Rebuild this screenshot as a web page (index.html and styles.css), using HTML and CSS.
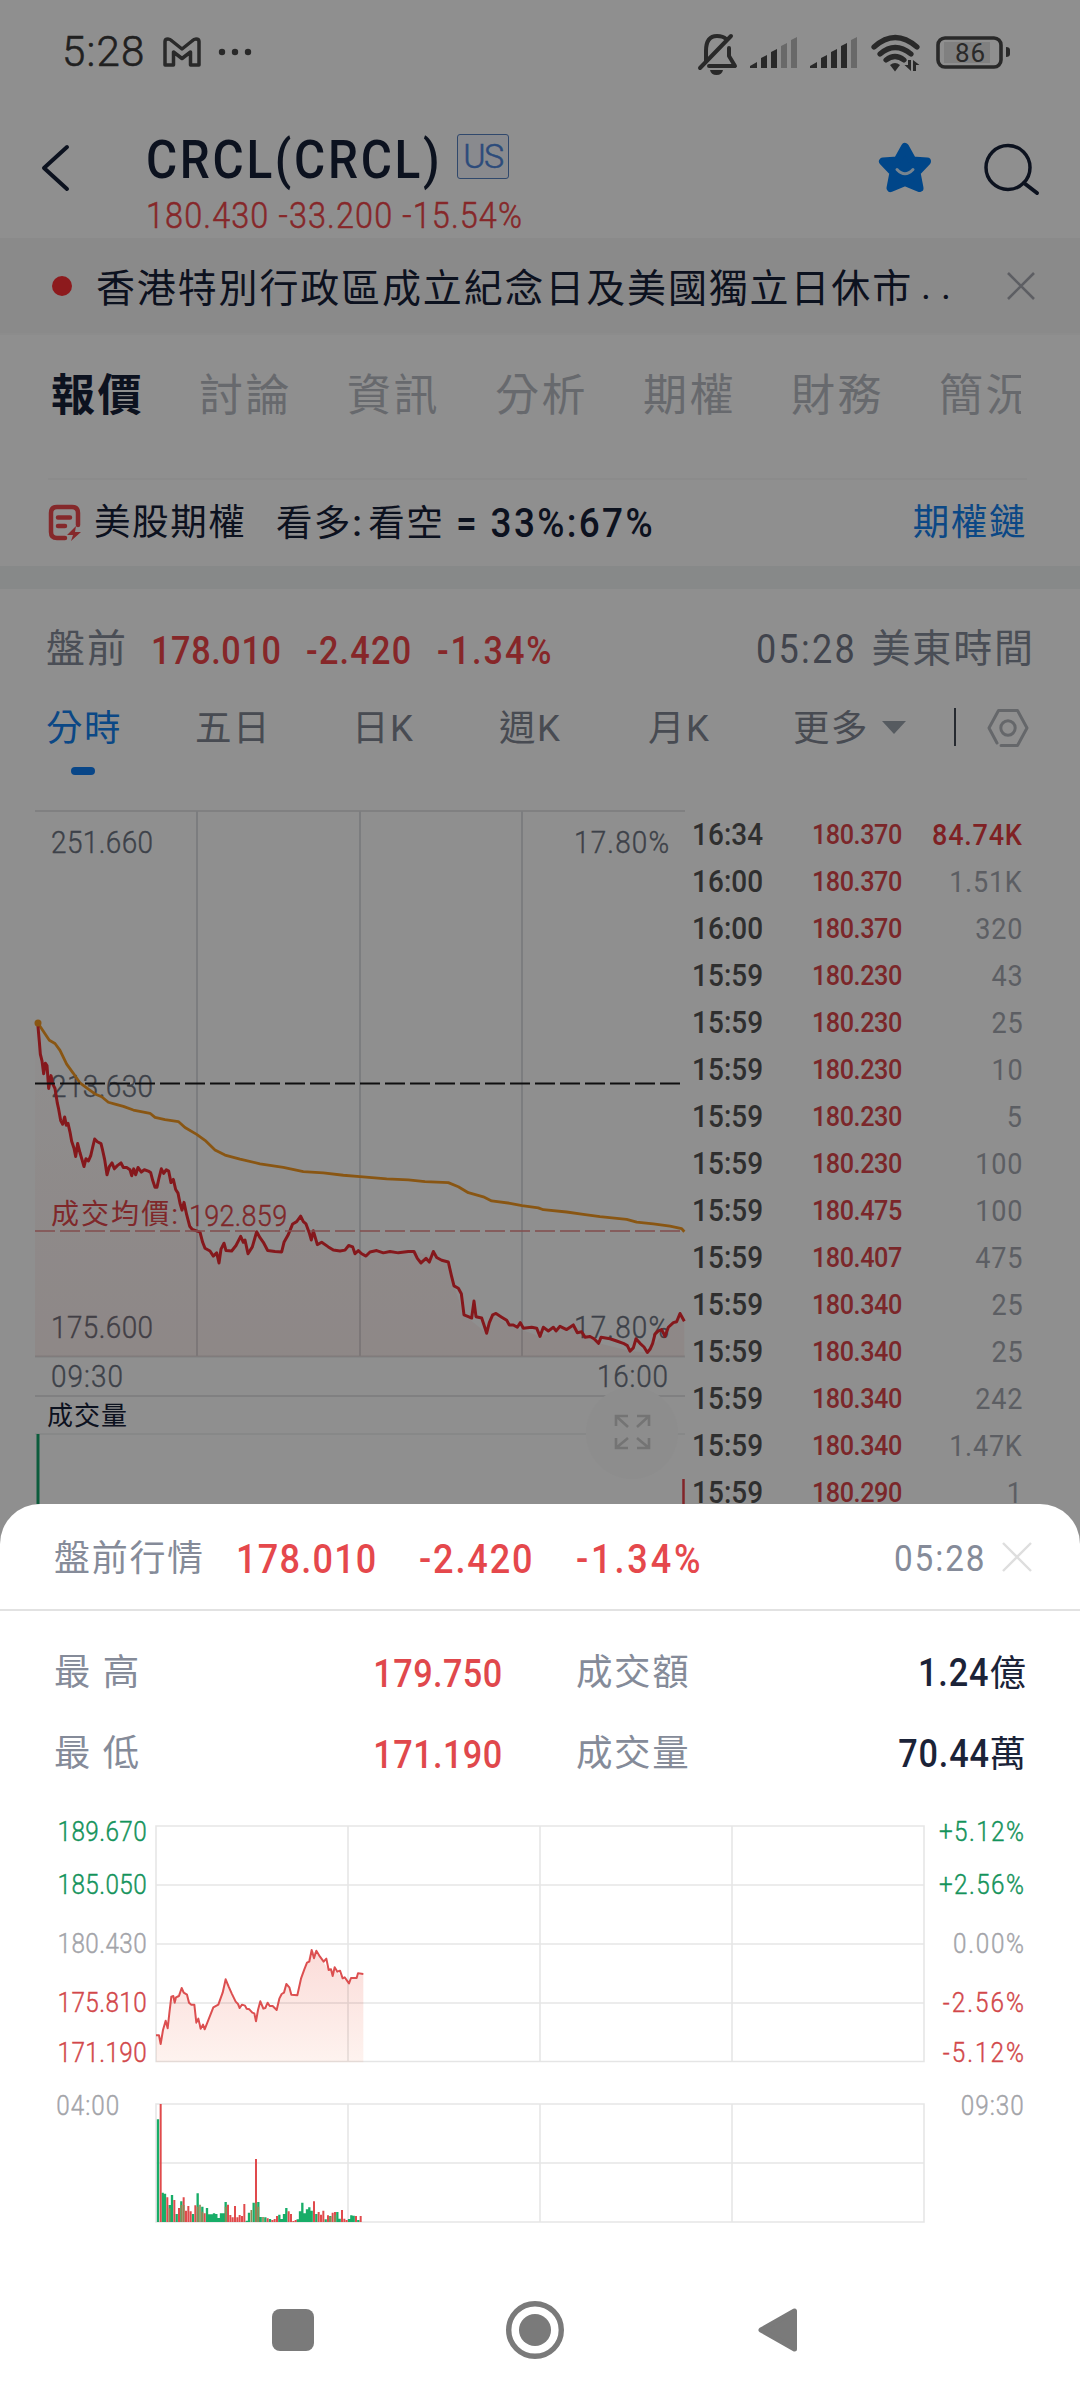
FILE: index.html
```html
<!DOCTYPE html>
<html lang="zh-Hant">
<head>
<meta charset="utf-8">
<title>CRCL</title>
<link rel="stylesheet" href="styles.css">
</head>
<body>
<div class="screen">
  <div class="page">
    <div class="status">
      <span class="clock">5:28</span>
      <svg class="gmail" width="38" height="30" viewBox="0 0 38 30"><path d="M2 4.500Q2 2 5 2Q7 2 9 4L19 12L29 4Q31 2 33 2Q36 2 36 4.500V28H27.500V15L19 21.500L10.500 15V28H2Z"/></svg>
      <svg class="more" width="34" height="10" viewBox="0 0 34 10"><circle cx="4" cy="5" r="3.200"/><circle cx="17" cy="5" r="3.200"/><circle cx="30" cy="5" r="3.200"/></svg>
      <svg class="tray" width="320" height="46" viewBox="694 30 320 46">
        <g fill="none" stroke="#4a4a4a" stroke-width="4" stroke-linecap="round">
          <path d="M706 61V51C706 41 710 36 717 36Q723 36 726 39M729 48V56L735 66H709M700 68L731 36" stroke-linejoin="round"/>
          <rect x="938" y="38" width="63" height="29" rx="7" stroke-width="3.600"/>
          <path d="M874 47Q895 28 917 47M880 54Q895 41 911 54M886 60Q895 53 904 60" stroke-width="5.200"/>
        </g>
        <g fill="#4a4a4a">
          <path d="M710 70H723Q722 75 716.500 75T710 70Z"/>
          <path d="M750 66L757 62V68H750ZM761 58L767 55V68H761ZM771 52L777 49V68H771Z"/>
          <path d="M810 66L817 62V68H810ZM821 58L827 55V68H821ZM831 52L837 49V68H831ZM841 46L847 43V68H841Z"/>
          <path d="M890 65Q895 61 900 65L895 71.500Z"/>
          <path d="M911 60V71L904.500 65H908V60ZM913 71V60L919.500 65H916V71Z"/>
          <path d="M1006 47Q1010 47 1010 50V54Q1010 57 1006 57Z"/>
        </g>
        <path fill="#bcbcbc" d="M781 46L787 43V68H781ZM791 40L797 37V68H791ZM851 40L857 37V68H851Z"/>
        <rect x="944" y="42" width="46" height="21" fill="#e4e4e4"/>
        <text x="955" y="61.500" font-size="26" fill="#4a4a4a" textLength="30">86</text>
      </svg>
    </div>

    <div class="header">
      <svg class="back" width="34" height="50" viewBox="0 0 34 50"><path d="M29 5L6 26L29 47"/></svg>
      <div class="heading">
        <div class="name"><span class="ticker"><span class="din">CRCL(CRCL)</span></span><span class="market">US</span></div>
        <div class="sub"><span class="din">180.430 -33.200 -15.54%</span></div>
      </div>
      <svg class="star" width="56" height="54" viewBox="0 0 56 54"><path d="M28 6L35.500 19.500L50 20.500L39.500 31.500L42.500 47L28 41L13.500 47L16.500 31.500L6 20.500L20.500 19.500Z" fill="#007df5" stroke="#007df5" stroke-width="8" stroke-linejoin="round"/><path d="M20 28.500Q28 37 36 28.500" fill="none" stroke="#d5ecff" stroke-width="3" stroke-linecap="round"/></svg>
      <svg class="search" width="58" height="54" viewBox="0 0 58 54"><g fill="none" stroke="#172038" stroke-width="3.500" stroke-linecap="round"><circle cx="26" cy="25.500" r="22"/><path d="M42 41L55 51" stroke-width="4"/></g></svg>
    </div>

    <div class="notice">
      <i class="dot"></i>
      <span class="notice-text">香港特別行政區成立紀念日及美國獨立日休市</span><span class="ell">..</span>
      <svg class="notice-x" width="30" height="30" viewBox="0 0 30 30"><path d="M2 2L28 28M28 2L2 28"/></svg>
    </div>

    <nav class="tabs"><span class="on">報價</span><span>討論</span><span>資訊</span><span>分析</span><span>期權</span><span>財務</span><span>簡況</span></nav>

    <div class="option">
      <svg width="34" height="38" viewBox="0 0 34 38"><path d="M17 34H9Q3 34 3 28V9Q3 3 9 3H24Q30 3 30 9V21M10 13.500H22M10 22H17" fill="none" stroke="#ee4a4e" stroke-width="4.500" stroke-linecap="round"/><path d="M28 22L19 31H25L23 37L33 28H27Z" fill="#ee4a4e"/></svg>
      <span class="opt-name">美股期權</span>
      <span class="opt-ratio">看多<i>:</i><b>看空</b></span><span class="opt-num"><span class="din">= 33%:67%</span></span>
      <span class="opt-link">期權鏈</span>
    </div>

    <div class="quote">
      <span class="q-label">盤前</span><span class="q1"><span class="din">178.010</span></span><span class="q2"><span class="din">-2.420</span></span><span class="q3"><span class="din">-1.34%</span></span>
      <span class="q-time"><span class="din">05:28</span></span><span class="q-zone">美東時間</span>
    </div>

    <div class="periods">
      <span class="on">分時</span><span>五日</span><span>日K</span><span>週K</span><span>月K</span><span>更多</span>
      <i class="caret"></i><i class="bar"></i>
      <svg width="42" height="40" viewBox="0 0 42 40"><g fill="none" stroke="#b4b8be" stroke-width="3" stroke-linejoin="round" stroke-linecap="round"><path d="M10 35L2 20L11.500 2.500H30.500L40 20L30.500 37.500H14"/><circle cx="21" cy="20" r="7.200"/></g></svg>
    </div>

    <div class="market-row">
      <svg class="chart" width="690" height="714" viewBox="0 790 690 714">
        <defs><linearGradient id="fillA" x1="0" y1="0" x2="0" y2="1"><stop offset="0" stop-color="#f04030" stop-opacity=".01"/><stop offset="1" stop-color="#f04030" stop-opacity=".07"/></linearGradient></defs>
        <g stroke="#e4e5e7" stroke-width="2"><path d="M35 811H685M35 1356.500H685M35 1396H685"/><path d="M197 811V1356M360 811V1356M522 811V1356" stroke="#dddfe2"/><path d="M35 1434H685" stroke="#f1f2f3"/></g>
        <circle cx="632" cy="1433" r="46" fill="#fbfbfb"/>
        <g class="lbl" transform="scale(.9 1)">
          <text x="56.700" y="853" textLength="113.300">251.660</text><text x="56.700" y="1097" textLength="113.300">213.630</text><text x="56.700" y="1338" textLength="113.300">175.600</text>
          <text x="637.800" y="853" textLength="105.600">17.80%</text><text x="637.800" y="1338" textLength="105.600">17.80%</text>
          <text x="56.700" y="1387" textLength="80">09:30</text><text x="663.300" y="1387" textLength="79">16:00</text>
        </g>
        <g transform="translate(0 790) scale(.333333 .459184)" fill="none" stroke-linejoin="round">
          <path fill="url(#fillA)" d="M113 507L121 575L131 618L146 650L165 650L182 720L204 726L227 798L252 820L284 760L303 770L321 838L343 825L363 812L395 840L414 822L452 833L465 865L484 825L506 830L540 900L569 950L600 963L608 985L640 1015L657 1030L672 987L695 1004L722 972L744 1010L770 962L803 1003L845 1006L865 968L902 928L934 980L985 995L1020 1004L1046 992L1075 1006L1250 1005L1345 1028L1362 1080L1392 1143L1460 1183L1478 1143L1528 1165L1620 1190L1720 1165L1796 1205L1890 1222L1942 1225L2040 1140L2053 1157V1234H105V507Z"/>
          <path vector-effect="non-scaling-stroke" stroke="#f59a23" stroke-width="2.800" d="M113 507L148 545L165 552L180 567L200 597L220 617L240 638L262 650L285 662L305 668L325 680L345 684L370 689L400 697L450 704L465 713L495 718L535 722L555 735L590 750L615 763L645 784L675 795L720 804L780 814L850 822L910 831L970 834L1030 839L1080 842L1160 847L1225 849L1275 853L1345 855L1375 864L1405 877L1450 886L1475 895L1530 900L1566 905L1615 910L1630 914L1700 919L1750 924L1800 929L1880 935L1910 941L1960 945L2010 950L2045 955L2053 962"/>
          <path vector-effect="non-scaling-stroke" stroke="#ed2b33" stroke-width="3" d="M113 507L118 548L121 575L126 590L131 618L136 595L141 600L146 650L153 622L158 640L165 650L172 682L176 695L182 720L188 728L194 712L199 730L204 726L210 745L215 765L222 780L227 798L233 770L240 790L246 805L252 820L258 803L265 808L272 797L278 778L284 760L292 766L303 770L308 785L314 805L321 838L328 820L336 812L343 825L352 818L363 812L370 822L380 822L390 827L395 840L401 825L407 838L414 822L424 832L433 827L445 830L452 833L458 850L465 865L471 865L477 845L484 825L491 835L499 827L506 830L513 855L520 848L527 870L534 878L540 900L546 915L552 898L560 925L569 950L577 957L600 963L608 985L615 998L630 1004L640 1015L650 1008L657 1030L663 1000L672 987L678 1003L695 1004L708 992L722 972L730 985L735 980L744 1010L757 995L770 962L780 975L790 985L803 1003L825 1005L845 1006L852 985L865 968L878 945L890 940L902 928L910 940L918 945L928 965L934 980L940 960L952 990L965 985L985 995L1000 1002L1020 1004L1035 1002L1046 992L1058 995L1065 1010L1075 1003L1085 1010L1098 1015L1110 1006L1130 1003L1150 1008L1170 1005L1195 1008L1225 1005L1242 1005L1252 1020L1263 1030L1278 1020L1288 1028L1300 1005L1310 1018L1325 1024L1345 1028L1355 1060L1362 1080L1375 1085L1384 1097L1392 1143L1405 1147L1415 1150L1422 1113L1428 1147L1445 1150L1452 1165L1460 1183L1468 1160L1478 1143L1488 1140L1505 1148L1520 1155L1528 1165L1540 1165L1552 1170L1561 1160L1570 1172L1595 1170L1610 1172L1620 1190L1630 1170L1645 1178L1660 1170L1668 1178L1680 1168L1700 1175L1720 1165L1732 1182L1745 1180L1755 1192L1770 1190L1782 1195L1796 1205L1803 1192L1830 1195L1850 1200L1870 1205L1882 1210L1890 1222L1900 1215L1908 1195L1920 1205L1932 1213L1942 1225L1950 1218L1958 1205L1965 1185L1975 1178L1985 1175L1995 1190L2005 1170L2020 1160L2030 1158L2040 1140L2053 1157"/>
        </g>
        <circle cx="38" cy="1023" r="3.500" fill="#f59a23"/>
        <path d="M35 1083.500H685" stroke="#1c1c1e" stroke-width="1.800" stroke-dasharray="20 5"/>
        <path d="M35 1231H685" stroke="#e88a8a" stroke-width="1.600" stroke-dasharray="20 5"/>
        <text class="avg" x="51" y="1224" textLength="127">成交均價:</text><text class="avg num" transform="scale(.9 1)" x="210" y="1226" textLength="109">192.859</text>
        <text class="voltitle" x="47" y="1425" textLength="80">成交量</text>
        <path d="M38 1434V1504" stroke="#16a56c" stroke-width="3"/><path d="M683.500 1479V1504" stroke="#e8404a" stroke-width="2.500"/>
        <path d="M628 1427L616 1416M616 1426V1416H628M637 1427L649 1416M637 1416H649V1426M628 1438L616 1448M616 1438V1448H628M637 1438L649 1448M637 1448H649V1438" fill="none" stroke="#cfcfcf" stroke-width="2.600"/>
      </svg>
      <div class="ticks">
        <div><b>16:34</b><em>180.370</em><span class="hot">84.74K</span></div>
        <div><b>16:00</b><em>180.370</em><span>1.51K</span></div>
        <div><b>16:00</b><em>180.370</em><span>320</span></div>
        <div><b>15:59</b><em>180.230</em><span>43</span></div>
        <div><b>15:59</b><em>180.230</em><span>25</span></div>
        <div><b>15:59</b><em>180.230</em><span>10</span></div>
        <div><b>15:59</b><em>180.230</em><span>5</span></div>
        <div><b>15:59</b><em>180.230</em><span>100</span></div>
        <div><b>15:59</b><em>180.475</em><span>100</span></div>
        <div><b>15:59</b><em>180.407</em><span>475</span></div>
        <div><b>15:59</b><em>180.340</em><span>25</span></div>
        <div><b>15:59</b><em>180.340</em><span>25</span></div>
        <div><b>15:59</b><em>180.340</em><span>242</span></div>
        <div><b>15:59</b><em>180.340</em><span>1.47K</span></div>
        <div><b>15:59</b><em>180.290</em><span>1</span></div>
      </div>
    </div>
  </div>
  <div class="scrim"></div>

  <section class="sheet">
    <div class="sheet-head">
      <span class="s-title">盤前行情</span><span class="s1"><span class="din">178.010</span></span><span class="s2"><span class="din">-2.420</span></span><span class="s3"><span class="din">-1.34%</span></span>
      <span class="s-time"><span class="din">05:28</span></span>
      <svg width="32" height="32" viewBox="0 0 32 32"><path d="M2 2L30 30M30 2L2 30" stroke="#dedede" stroke-width="2.400"/></svg>
    </div>
    <div class="stats">
      <span>最 高</span><em class="din end">179.750</em><span class="k2">成交額</span><strong><span class="din end">1.24</span><i>億</i></strong>
      <span>最 低</span><em class="din end">171.190</em><span class="k2">成交量</span><strong><span class="din end">70.44</span><i>萬</i></strong>
    </div>
    <svg class="mini" width="1080" height="450" viewBox="0 1800 1080 450">
      <defs><linearGradient id="fillB" x1="0" y1="0" x2="0" y2="1"><stop offset="0" stop-color="#fbdcd9"/><stop offset="1" stop-color="#fef3ef"/></linearGradient></defs>
      <path transform="translate(0 1800) scale(.333333)" fill="url(#fillB)" d="M468 706H477L482 732L497 662L503 685L514 590L528 592L545 564L561 584L574 614H583L589 668L602 686L614 688L640 622L655 614L677 538L707 605L719 624L748 628L763 640L768 664L781 604L796 624L818 618L830 630L838 596L859 552L874 584L892 586L913 508L935 450L960 470L986 510L1012 515L1028 535L1047 550L1053 534L1090 522V787H468Z"/>
      <g fill="none" stroke="#000" stroke-opacity=".1" stroke-width="1.600"><path d="M156 1826H924V2061.500H156ZM156 1885H924M156 1944H924M156 2003H924M348 1826V2061.500M540 1826V2061.500M732 1826V2061.500"/><path d="M156 2104H924V2222H156ZM156 2163H924M348 2104V2222M540 2104V2222M732 2104V2222"/></g>
      <g transform="translate(0 1800) scale(.333333)" fill="none">
        <path stroke="#dc4f50" stroke-width="6" stroke-linejoin="round" d="M468 706L477 706L482 732L489 690L497 662L503 685L508 640L514 590L520 588L524 608L528 592L537 588L545 564L551 578L561 584L567 608L574 614L583 614L589 668L595 656L602 686L609 674L614 688L622 668L640 622L655 614L668 578L677 538L686 560L695 580L707 605L714 612L719 624L726 614L735 617L740 626L748 628L757 638L763 640L768 664L774 630L781 604L790 626L796 624L803 608L809 618L818 618L830 630L838 596L845 582L852 578L859 552L868 562L874 584L892 586L903 536L913 508L921 488L928 485L935 450L942 475L949 452L960 470L971 485L979 476L986 510L993 508L998 528L1004 502L1012 515L1020 512L1028 535L1034 532L1047 550L1053 534L1070 534L1074 520L1090 522"/>
        <path stroke="#18ad68" stroke-width="7" d="M474 1266V958M488 1266V1178M495 1266V1181M509 1266V1215M516 1266V1185M530 1266V1242M544 1266V1204M579 1266V1242M593 1266V1180M607 1266V1220M621 1266V1224M628 1266V1243M635 1266V1243M642 1266V1240M649 1266V1242M656 1266V1254M663 1266V1240M670 1266V1240M677 1266V1206M740 1266V1262M747 1266V1238M761 1266V1208M775 1266V1206M782 1266V1251M796 1266V1252M810 1266V1257M838 1266V1244M845 1266V1257M852 1266V1242M859 1266V1224M893 1266V1258M900 1266V1234M907 1266V1208M914 1266V1240M921 1266V1228M928 1266V1222M935 1266V1232M949 1266V1242M977 1266V1258M991 1266V1248M1012 1266V1236M1019 1266V1256M1047 1266V1257M1054 1266V1246M1061 1266V1247M1075 1266V1260"/>
        <path stroke="#e04a4c" stroke-width="6" d="M482 1266V912M502 1266V1192M523 1266V1200M537 1266V1224M551 1266V1192M558 1266V1232M565 1266V1218M572 1266V1234M586 1266V1216M614 1266V1240M684 1266V1214M691 1266V1245M698 1266V1252M705 1266V1218M712 1266V1252M719 1266V1245M726 1266V1248M733 1266V1212M768 1266V1077M803 1266V1255M817 1266V1260M824 1266V1257M831 1266V1248M866 1266V1234M873 1266V1242M880 1266V1263M887 1266V1260M942 1266V1204M956 1266V1236M963 1266V1244M970 1266V1232M984 1266V1246M998 1266V1238M1005 1266V1236M1026 1266V1230M1033 1266V1256M1040 1266V1260M1068 1266V1248M1082 1266V1248"/>
        <path stroke="#8f8752" stroke-width="5" d="M600 1266V1214M754 1266V1230M789 1266V1251M768 1266V1210M544 1266V1215M551 1266V1215M509 1266V1225M593 1266V1220M677 1266V1220M775 1266V1220M1005 1266V1245M991 1266V1250M607 1266V1235"/>
      </g>
      <g class="axis" transform="scale(.9 1)">
        <text class="up" x="64" y="1841" textLength="99">189.670</text><text class="up" x="64" y="1894" textLength="99">185.050</text><text class="flat" x="64" y="1953" textLength="99">180.430</text><text class="down" x="64" y="2012" textLength="99">175.810</text><text class="down" x="64" y="2062" textLength="99">171.190</text><text class="flat" x="62.500" y="2115" textLength="70">04:00</text>
        <text class="up" x="1043.300" y="1841" textLength="94.400">+5.12%</text><text class="up" x="1043.300" y="1894" textLength="94.400">+2.56%</text><text class="flat" x="1058.900" y="1953" textLength="78.900">0.00%</text><text class="down" x="1047.500" y="2012" textLength="90.300">-2.56%</text><text class="down" x="1047.500" y="2062" textLength="90.300">-5.12%</text><text class="flat" x="1067.500" y="2115" textLength="70">09:30</text>
      </g>
    </svg>
    <div class="sysnav">
      <i class="recent"></i>
      <svg width="60" height="60" viewBox="0 0 60 60"><circle cx="30" cy="30" r="26.300" fill="none" stroke="#7a7a7a" stroke-width="5.400"/><circle cx="30" cy="30" r="16" fill="#7a7a7a"/></svg>
      <svg width="42" height="50" viewBox="0 0 42 50"><path d="M4 25L37.500 6V44Z" fill="#7a7a7a" stroke="#7a7a7a" stroke-width="5" stroke-linejoin="round"/></svg>
    </div>
  </section>
</div>
</body>
</html>
```
FILE: styles.css
```css
* { box-sizing: border-box; }
body { margin: 0; background: #fff; }
i, em { font-style: normal; }
svg { display: block; flex: none; }
span { white-space: nowrap; }
.screen {
  position: relative;
  width: 1080px;
  height: 2400px;
  overflow: hidden;
  font-family: Roboto, "Noto Sans CJK TC", sans-serif;
  color: #172038;
}
.page { height: 1504px; overflow: hidden; }
.page, .sheet { line-height: 1; }
.scrim { position: absolute; inset: 0; background: rgba(0, 0, 0, .44); }

/* narrowed figures */
.din { display: inline-block; transform: scaleX(.9); transform-origin: left center; }
.din.end { transform-origin: right center; }

.status { display: flex; align-items: center; height: 104px; padding-left: 62px; }
.clock { font-size: 42px; font-weight: 300; letter-spacing: 1.2px; color: #3a3a3a; -webkit-text-stroke: .6px #3a3a3a; width: 101px; }
.gmail { fill: none; stroke: #4a4a4a; stroke-width: 3.5; stroke-linejoin: round; }
.more { margin-left: 17px; fill: #4a4a4a; }
.tray { margin-left: 442px; margin-top: 2px; }

.header { display: flex; height: 134px; }
.back { margin: 38px 0 0 38px; fill: none; stroke: #172038; stroke-width: 4; stroke-linecap: round; stroke-linejoin: round; }
.heading { margin-left: 74px; width: 728px; padding-top: 28px; }
.name { display: flex; height: 54px; }
.ticker { font-size: 53px; font-weight: 500; width: 311px; letter-spacing: 3px; line-height: 56px; }
.market { width: 52px; height: 45px; margin-top: 2px; border: 1px solid #5680c0; border-radius: 3px; background: #f4f7fd; color: #4f86dc; font-size: 34px; font-weight: 300; line-height: 43px; text-align: center; -webkit-text-stroke: .5px #4f86dc; letter-spacing: -1.5px; }
.sub { height: 42px; margin-top: 9px; font-size: 36px; font-weight: 300; color: #ef464a; letter-spacing: 1.25px; line-height: 42px; white-space: nowrap; -webkit-text-stroke: .5px #ef464a; }
.star { margin: 37px 0 0 3px; }
.search { margin: 38px 0 0 49px; }

.notice { display: flex; align-items: center; height: 97px; padding-left: 52px; background: #f6f6f6; border-bottom: 2px solid #f9f9f9; }
.dot { width: 20px; height: 20px; border-radius: 50%; background: #fb2f35; }
.notice-text { margin-left: 24px; font-size: 39px; letter-spacing: 1.85px; font-family: "Noto Sans CJK TC"; font-weight: 400; }
.ell { margin-left: 8px; width: 85px; font-size: 38px; letter-spacing: 10px; }
.notice-x { stroke: #a6a8b0; stroke-width: 2.6; }

.tabs { display: flex; height: 143px; margin: 0 59px 0 51px; overflow: hidden; font-family: "Noto Sans CJK TC"; font-size: 44px; font-weight: 400; letter-spacing: 2.4px; color: #b8bbc3; line-height: 115px; }
.tabs span { flex: 0 0 148px; }
.tabs .on { font-weight: 700; color: #172038; }

.option { display: flex; align-items: center; height: 88px; margin: 0 53px 0 48px; border-top: 2px solid #f8f8f8; font-weight: 400; font-size: 36.5px; letter-spacing: 1.6px; }
.opt-name { margin-left: 12px; width: 182px; }
.opt-ratio { width: 180px; padding-top: 2px; }
.opt-ratio i { display: inline-block; width: 16px; font-weight: 500; }
.opt-ratio b { font-weight: 400; }
.opt-num { font-size: 41px; font-weight: 500; letter-spacing: 2.6px; }
.opt-link { margin-left: auto; color: #1580ee; }

.quote { display: flex; align-items: center; height: 124px; padding: 20px 45px 0 46px; border-top: 23px solid #f0f4f5; font-size: 38px; }
.quote .q-label, .quote .q-zone { font-size: 39px; letter-spacing: 1.9px; color: #858b99; }
.quote .q-label { width: 105px; }
.q1, .q2, .q3 { font-weight: 500; color: #ef464a; padding-top: 2px; }
.q1 { width: 155px; letter-spacing: .7px; }
.q2 { width: 131px; letter-spacing: 1.4px; }
.q3 { letter-spacing: 2.2px; }
.q-time { margin-left: auto; width: 115px; font-size: 40px; letter-spacing: 2.5px; color: #747a89; }

.periods { display: flex; height: 100px; padding-left: 46px; line-height: 77px; font-size: 36.5px; letter-spacing: 1.6px; font-weight: 400; color: #808693; }
.periods span { width: 149px; }
.periods span:nth-child(2) { width: 157px; }
.periods span:nth-child(3) { width: 147px; }
.periods span:nth-child(5) { width: 145px; }
.periods span:nth-child(6) { width: 89px; }
.periods .on { position: relative; color: #1580ee; }
.periods .on::after { content: ""; position: absolute; left: 25px; top: 77px; width: 24px; height: 8px; border-radius: 4px; background: #0f7df2; }
.caret { width: 24px; height: 13px; margin-top: 31px; background: #9aa3ac; clip-path: polygon(0 0, 100% 0, 50% 100%); }
.bar { width: 2px; height: 38px; margin: 18px 31px 0 48px; background: #444b57; }
.periods svg { margin-top: 18px; }

.market-row { display: flex; height: 714px; }
.chart .lbl { font-size: 31px; font-weight: 300; fill: #6d7482; stroke: #6d7482; stroke-width: .4px; }
.chart .avg { font-size: 28px; fill: #e2484c; }
.chart .avg.num { font-size: 30px; font-weight: 300; stroke: #e2484c; stroke-width: .4px; }
.chart .voltitle { font-size: 26px; fill: #172038; font-weight: 400; }
.ticks { padding-top: 21px; width: 333px; }
.ticks div { display: flex; align-items: center; height: 47px; font-size: 30px; padding-left: 2px; }
.ticks b, .ticks em { transform: scaleX(.9); transform-origin: left center; }
.ticks b { width: 120px; font-weight: 500; color: #555; font-size: 31px; letter-spacing: .1px; }
.ticks em { width: 100px; font-size: 28px; font-weight: 500; color: #dc474b; letter-spacing: -.5px; }
.ticks span { margin-left: auto; transform: scaleX(.9); transform-origin: right center; color: #a5a8b0; letter-spacing: .85px; }
.ticks .hot { color: #e23c40; font-weight: 500; }

.sheet { position: absolute; left: 0; top: 1504px; width: 1080px; height: 896px; border-radius: 40px 40px 0 0; background: #fff; }
.sheet-head { display: flex; align-items: center; height: 107px; padding: 4px 0 0 54px; border-bottom: 2px solid #e2e2e2; font-size: 40px; }
.sheet-head svg { margin-top: -4px; }
.s-title { width: 182px; font-size: 36px; letter-spacing: 1.7px; color: #858b99; }
.s1, .s2, .s3 { font-weight: 500; color: #e5484c; padding-top: 3px; }
.s1 { width: 183px; letter-spacing: 1.4px; }
.s2 { width: 157px; letter-spacing: 2.1px; }
.s3 { width: 0; letter-spacing: 3.2px; }
.s-time { width: 107px; margin-left: 318px; font-size: 37px; letter-spacing: 2.1px; color: #858b99; }
.stats { display: grid; grid-template-columns: 160px 289px 216px 1fr; grid-auto-rows: 81px; align-items: center; height: 189px; padding: 22px 54px 0 54px; font-size: 36.5px; letter-spacing: 1.6px; color: #858b99; }
.stats em { justify-self: end; font-size: 38px; font-weight: 500; letter-spacing: .5px; color: #e0484c; }
.stats .k2 { padding-left: 73px; }
.stats strong { justify-self: end; font-size: 38px; font-weight: 500; letter-spacing: 1px; color: #1b2338; }
.stats strong i { font-size: 36.5px; font-weight: 400; letter-spacing: 0; }
.axis { font-size: 27px; font-weight: 300; stroke-width: .4px; }
.axis .up { fill: #14935b; stroke: #14935b; }
.axis .down { fill: #d2474a; stroke: #d2474a; }
.axis .flat { fill: #a3a4a9; stroke: #a3a4a9; }
.sysnav { display: flex; align-items: center; height: 150px; padding: 10px 0 0 272px; }
.recent { width: 42px; height: 42px; border-radius: 8px; background: #7a7a7a; margin-right: 191px; }
.sysnav svg:last-child { margin-left: 192px; }
```
